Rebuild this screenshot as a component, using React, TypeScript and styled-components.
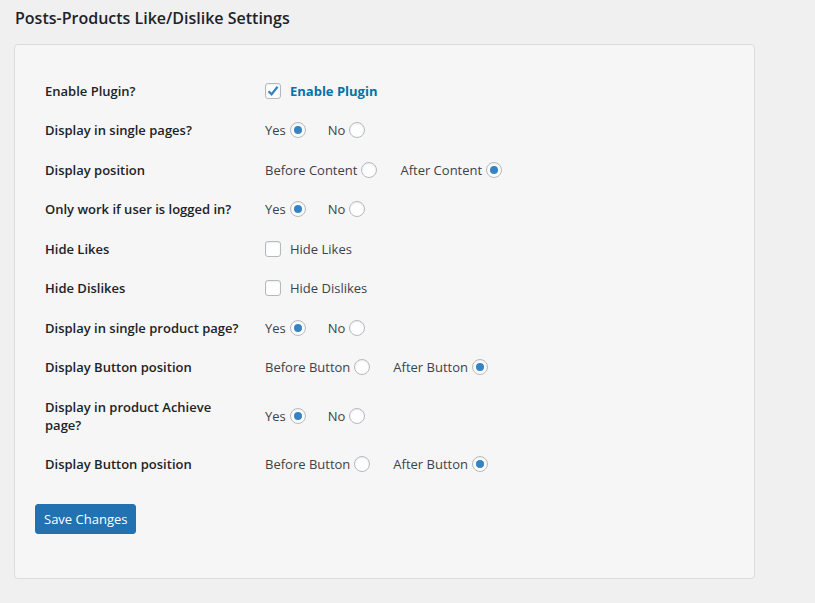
import React from 'react';
import styled, { createGlobalStyle } from 'styled-components';

const GlobalStyle = createGlobalStyle`
    body {
        margin: 0;
        background: #f0f0f1;
        font-family: "Open Sans", "Noto Sans", sans-serif;
        font-size: 13px;
        color: #3c434a;
    }
`;

const StyledPage = styled.div`
    padding: 6px 0 0 14px;
    width: 741px;
`;

const StyledTitle = styled.h2`
    margin: 0 0 14px 1px;
    font-size: 16px;
    font-weight: 600;
    line-height: 24px;
    color: #1d2327;
`;

const StyledCard = styled.div`
    background: #f6f6f6;
    border: 1px solid #dcdcde;
    border-radius: 4px;
    padding: 26px 20px 44px;
`;

const StyledRow = styled.div`
    display: grid;
    grid-template-columns: 220px 1fr;
    align-items: center;
    padding: 10.75px 0 10.75px 10px;
    line-height: 18px;
`;

const StyledLabel = styled.div`
    font-weight: 600;
    color: #1d2327;
    white-space: pre-line;
`;

const StyledControls = styled.div`
    display: flex;
    align-items: center;
`;

const StyledOption = styled.label<{ $gap: number }>`
    display: flex;
    align-items: center;
    margin-right: ${(p) => p.$gap}px;
`;

const StyledRadio = styled.span<{ $checked: boolean }>`
    display: inline-block;
    box-sizing: border-box;
    width: 16px;
    height: 16px;
    margin-left: 4px;
    border: 1px solid #b4b9be;
    border-radius: 50%;
    background: #fff;
    box-shadow: inset 0 1px 2px rgba(0, 0, 0, 0.08);
    position: relative;

    &::after {
        content: '';
        display: ${(p) => (p.$checked ? 'block' : 'none')};
        position: absolute;
        left: 3px;
        top: 3px;
        width: 8px;
        height: 8px;
        border-radius: 50%;
        background: #3582c4;
    }
`;

const StyledCheckbox = styled.span`
    display: inline-flex;
    align-items: center;
    justify-content: center;
    box-sizing: border-box;
    width: 16px;
    height: 16px;
    margin-right: 9px;
    border: 1px solid #b4b9be;
    border-radius: 3px;
    background: #fff;
    box-shadow: inset 0 1px 2px rgba(0, 0, 0, 0.08);
`;

const StyledStrong = styled.span`
    font-weight: 700;
    color: #0073aa;
`;

const StyledButton = styled.button`
    margin-top: 20px;
    height: 30px;
    padding: 0 8px;
    background: #2271b1;
    border: 1px solid #2271b1;
    border-radius: 3px;
    color: #fff;
    font-family: inherit;
    font-size: 13px;
    line-height: 28px;
`;

type Choice = { text: string; checked: boolean; gap: number };

function RadioGroup({ choices }: { choices: Choice[] }) {
    return (
        <StyledControls>
            {choices.map((c) => (
                <StyledOption key={c.text} $gap={c.gap}>
                    {c.text}
                    <StyledRadio $checked={c.checked} />
                </StyledOption>
            ))}
        </StyledControls>
    );
}

function CheckMark() {
    return (
        <svg width='12' height='12' viewBox='0 0 12 12'>
            <path d='M1.5 6.2 L4.6 9.3 L10.6 1.8' fill='none' stroke='#3582c4' strokeWidth='2.2' />
        </svg>
    );
}

const yesNo: Choice[] = [
    { text: 'Yes', checked: true, gap: 22 },
    { text: 'No', checked: false, gap: 0 },
];

const buttonPos: Choice[] = [
    { text: 'Before Button', checked: false, gap: 23 },
    { text: 'After Button', checked: true, gap: 0 },
];

const rows: { label: string; choices?: Choice[]; check?: string; strong?: boolean }[] = [
    { label: 'Enable Plugin?', check: 'Enable Plugin', strong: true },
    { label: 'Display in single pages?', choices: yesNo },
    {
        label: 'Display position',
        choices: [
            { text: 'Before Content', checked: false, gap: 23 },
            { text: 'After Content', checked: true, gap: 0 },
        ],
    },
    { label: 'Only work if user is logged in?', choices: yesNo },
    { label: 'Hide Likes', check: 'Hide Likes' },
    { label: 'Hide Dislikes', check: 'Hide Dislikes' },
    { label: 'Display in single product page?', choices: yesNo },
    { label: 'Display Button position', choices: buttonPos },
    { label: 'Display in product Achieve\npage?', choices: yesNo },
    { label: 'Display Button position', choices: buttonPos },
];

export default function App() {
    return (
        <StyledPage>
            <GlobalStyle />
            <StyledTitle>Posts-Products Like/Dislike Settings</StyledTitle>
            <StyledCard>
                {rows.map((r, i) => (
                    <StyledRow key={i}>
                        <StyledLabel>{r.label}</StyledLabel>
                        {r.choices ? (
                            <RadioGroup choices={r.choices} />
                        ) : (
                            <StyledControls>
                                <StyledCheckbox>{r.strong && <CheckMark />}</StyledCheckbox>
                                {r.strong ? <StyledStrong>{r.check}</StyledStrong> : r.check}
                            </StyledControls>
                        )}
                    </StyledRow>
                ))}
                <StyledButton>Save Changes</StyledButton>
            </StyledCard>
        </StyledPage>
    );
}
